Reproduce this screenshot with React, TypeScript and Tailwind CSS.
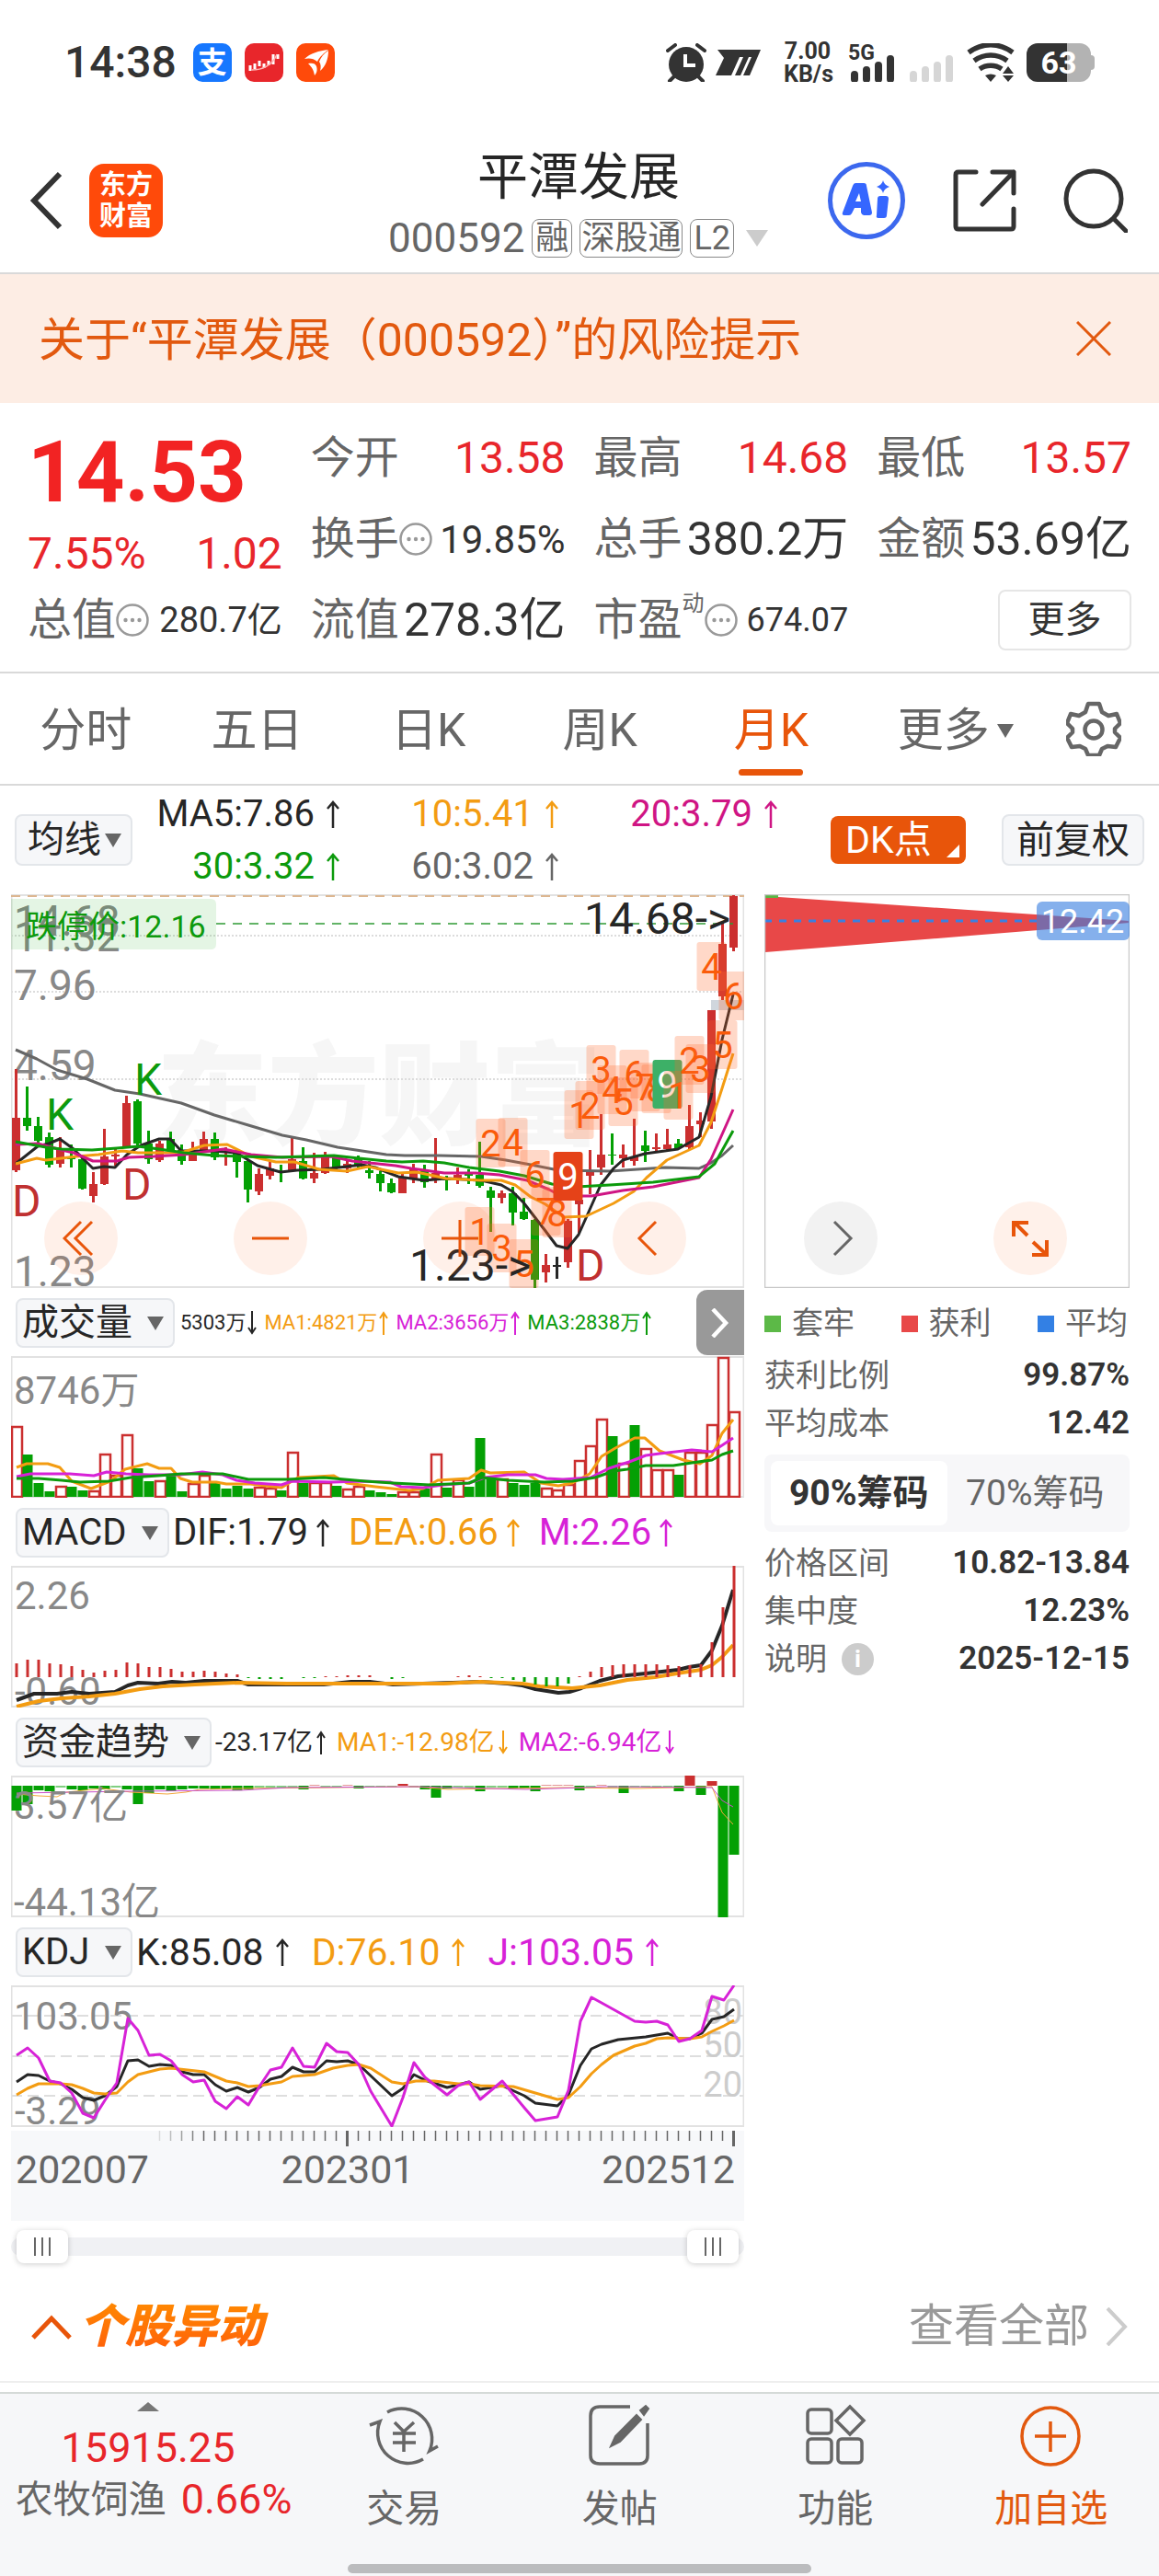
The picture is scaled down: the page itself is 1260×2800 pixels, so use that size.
/**
 * Stock Detail Page
 *
 * Monthly K-line view of a single stock: quote header, period tabs,
 * candle chart with sub-indicators, chip distribution and bottom bar.
 */

import React, { useState } from 'react';

type Point = [number, number];
// high, body top, body bottom, low, colour
type Candle = [number, number, number, number, 'r' | 'g' | 'k'];

const RED = '#cb2f2f';
const GREEN = '#04a004';
const STEP = 12;

const candleX = (i: number) => 5.5 + i * STEP;
const toPoints = (points: Point[]) => points.map((p) => p.join(',')).join(' ');

const CANDLES: Candle[] = [
  [190, 243, 300, 302, 'r'], [209, 243, 252, 257, 'g'], [242, 252, 268, 270, 'g'], [259, 264, 294, 297, 'g'],
  [264, 277, 293, 297, 'r'], [272, 286, 288, 297, 'g'], [285, 288, 320, 321, 'g'], [302, 315, 328, 335, 'r'],
  [255, 285, 315, 316, 'r'], [276, 283, 285, 295, 'r'], [219, 227, 275, 276, 'r'], [223, 225, 271, 273, 'g'],
  [257, 271, 288, 293, 'g'], [268, 271, 289, 291, 'r'], [258, 266, 279, 281, 'g'], [272, 278, 290, 294, 'g'],
  [269, 281, 290, 290, 'r'], [258, 266, 278, 279, 'r'], [259, 266, 286, 289, 'g'], [275, 279, 281, 295, 'r'],
  [277, 281, 291, 308, 'g'], [288, 290, 321, 335, 'g'], [298, 304, 323, 327, 'r'], [290, 298, 306, 310, 'r'],
  [294, 301, 302, 313, 'g'], [265, 288, 301, 302, 'r'], [275, 290, 309, 310, 'g'], [281, 303, 309, 314, 'r'],
  [280, 285, 303, 304, 'r'], [283, 285, 298, 301, 'g'], [290, 293, 298, 303, 'r'], [284, 288, 296, 298, 'g'],
  [290, 300, 303, 309, 'g'], [301, 304, 314, 323, 'g'], [309, 314, 324, 325, 'g'], [303, 307, 325, 325, 'r'],
  [293, 298, 309, 314, 'r'], [294, 301, 313, 319, 'g'], [265, 303, 310, 314, 'r'], [306, 309, 311, 322, 'g'],
  [297, 305, 311, 315, 'r'], [299, 303, 306, 315, 'g'], [269, 305, 317, 319, 'g'], [318, 322, 330, 367, 'g'],
  [322, 325, 330, 336, 'r'], [318, 325, 346, 360, 'g'], [330, 345, 353, 354, 'g'], [353, 354, 419, 428, 'g'],
  [391, 403, 411, 422, 'r'], [394, 403, 405, 418, 'k'], [353, 355, 400, 406, 'r'], [328, 332, 337, 368, 'r'],
  [278, 302, 306, 326, 'r'], [239, 283, 297, 305, 'r'], [260, 283, 284, 294, 'g'], [272, 283, 287, 297, 'r'],
  [244, 285, 290, 295, 'r'], [257, 273, 279, 291, 'g'], [260, 275, 277, 279, 'r'], [255, 272, 277, 278, 'r'],
  [266, 271, 276, 277, 'g'], [229, 252, 275, 277, 'r'], [237, 246, 250, 264, 'r'], [126, 126, 247, 255, 'r'],
  [31, 54, 111, 115, 'r'], [1, 2, 58, 62, 'r'],
];

const MA5: Point[] = [[5, 293], [29, 274], [41, 271], [53, 266], [68, 277], [89, 298], [101, 296], [113, 297], [126, 283], [141, 273], [161, 266], [173, 266], [185, 279], [221, 279], [245, 281], [268, 295], [293, 302], [311, 300], [338, 299], [365, 296], [381, 294], [396, 297], [421, 307], [449, 311], [473, 309], [511, 311], [533, 316], [545, 323], [557, 335], [581, 366], [593, 382], [605, 385], [617, 370], [641, 316], [655, 298], [665, 289], [689, 282], [725, 277], [748, 264], [761, 220], [773, 158], [785, 109]];
const MA10: Point[] = [[5, 293], [28, 287], [38, 289], [71, 285], [95, 283], [121, 279], [138, 281], [168, 281], [188, 280], [210, 273], [235, 272], [261, 285], [288, 291], [308, 291], [335, 299], [365, 301], [388, 296], [421, 303], [441, 302], [473, 309], [511, 311], [533, 311], [548, 316], [565, 329], [581, 337], [601, 351], [625, 350], [655, 336], [677, 323], [691, 308], [713, 289], [748, 273], [761, 248], [773, 211], [785, 173]];
const MA20: Point[] = [[5, 272], [29, 271], [55, 278], [68, 281], [89, 290], [115, 290], [128, 286], [155, 285], [188, 283], [231, 277], [261, 283], [295, 286], [348, 285], [371, 290], [418, 295], [435, 298], [471, 303], [505, 303], [531, 305], [561, 311], [585, 321], [598, 328], [631, 328], [665, 322], [698, 318], [748, 308], [761, 288], [773, 261], [785, 234]];
const MA30: Point[] = [[5, 269], [38, 275], [55, 277], [88, 278], [115, 276], [138, 274], [161, 277], [188, 281], [221, 284], [288, 286], [351, 284], [378, 287], [408, 290], [425, 291], [448, 290], [471, 292], [498, 297], [531, 301], [558, 306], [588, 315], [615, 318], [651, 316], [698, 313], [748, 307], [765, 293], [785, 257]];
const MA60: Point[] = [[5, 169], [28, 179], [50, 191], [83, 201], [113, 213], [140, 217], [185, 227], [221, 240], [258, 251], [295, 262], [321, 267], [355, 275], [408, 283], [428, 284], [465, 284], [511, 285], [538, 289], [565, 294], [595, 300], [651, 301], [711, 297], [748, 298], [761, 292], [773, 284], [785, 273]];

// candle index, box top, digit, solid fill for a completed count
const COUNTS: [number, number, string, string?][] = [
  [42, 340, '1'], [43, 244, '2'], [44, 358, '3'], [45, 243, '4'], [46, 375, '5'], [47, 278, '6'], [48, 318, '7'],
  [49, 320, '8'], [50, 280, '9', '#e54218'], [51, 213, '1'], [52, 203, '2'], [53, 164, '3'], [54, 186, '4'],
  [55, 199, '5'], [56, 169, '6'], [57, 183, '7'], [58, 185, '8'], [59, 180, '9', '#3db067'], [60, 192, '1'],
  [61, 154, '2'], [62, 163, '3'], [63, 52, '4'], [64, 137, '5'], [65, 84, '6'],
];

const VOLUMES: [number, 'r' | 'g'][] = [
  [76, 'r'], [107, 'g'], [138, 'g'], [147, 'g'], [141, 'r'], [142, 'g'], [146, 'g'], [146, 'r'], [106, 'r'], [129, 'r'],
  [85, 'r'], [122, 'g'], [136, 'g'], [135, 'r'], [129, 'g'], [147, 'g'], [138, 'r'], [129, 'r'], [138, 'g'], [144, 'g'],
  [141, 'g'], [144, 'g'], [142, 'r'], [143, 'r'], [146, 'g'], [104, 'r'], [138, 'g'], [137, 'r'], [137, 'r'], [141, 'g'],
  [144, 'r'], [141, 'r'], [146, 'g'], [148, 'g'], [150, 'g'], [147, 'r'], [147, 'r'], [144, 'g'], [106, 'r'], [143, 'g'],
  [134, 'r'], [142, 'g'], [89, 'g'], [133, 'g'], [133, 'r'], [138, 'g'], [140, 'g'], [138, 'g'], [143, 'r'], [145, 'r'],
  [139, 'r'], [113, 'r'], [97, 'r'], [68, 'r'], [87, 'g'], [116, 'r'], [75, 'g'], [100, 'r'], [123, 'r'], [123, 'r'],
  [129, 'g'], [104, 'r'], [104, 'r'], [74, 'r'], [1, 'r'], [60, 'r'],
];
const VOL_MA1: Point[] = [[6, 121], [17, 117], [40, 117], [53, 121], [66, 136], [87, 144], [108, 136], [124, 123], [148, 117], [161, 122], [174, 122], [184, 133], [197, 137], [223, 137], [234, 139], [260, 139], [294, 143], [312, 132], [351, 130], [365, 138], [396, 142], [433, 146], [448, 144], [464, 135], [498, 133], [511, 124], [521, 127], [558, 126], [576, 138], [595, 141], [610, 138], [629, 128], [642, 109], [657, 100], [678, 89], [689, 89], [705, 103], [731, 113], [749, 117], [762, 108], [773, 84], [785, 69]];
const VOL_MA2: Point[] = [[6, 131], [21, 128], [64, 128], [90, 130], [104, 126], [125, 128], [150, 129], [184, 129], [208, 126], [230, 129], [245, 135], [265, 138], [294, 140], [305, 136], [350, 137], [380, 136], [412, 137], [424, 142], [448, 143], [470, 140], [498, 138], [515, 132], [540, 129], [570, 129], [582, 133], [600, 134], [630, 132], [650, 122], [672, 115], [690, 108], [705, 106], [740, 102], [762, 104], [773, 97], [785, 89]];
const VOL_MA3: Point[] = [[6, 133], [30, 133], [55, 135], [75, 137], [106, 136], [130, 132], [160, 130], [185, 128], [230, 128], [258, 134], [300, 134], [340, 132], [385, 136], [415, 138], [455, 140], [498, 138], [512, 132], [540, 135], [580, 137], [610, 136], [635, 132], [655, 125], [670, 123], [690, 119], [720, 119], [740, 116], [762, 113], [773, 107], [785, 103]];

// bar ends, measured from the zero line at 121
const MACD_BARS = [
  106, 102, 102, 106, 107, 109, 113, 116, 114, 113, 105, 106, 110, 110, 112, 115, 115, 114, 115, 117, 118, 122, 123, 123,
  123, 121, 122, 122, 120, 120, 119, 119, 119, 121, 123, 122, 121, 121, 121, 121, 120, 119, 120, 122, 122, 124, 126, 129,
  131, 131, 128, 120, 115, 110, 108, 107, 107, 107, 107, 108, 109, 108, 107, 83, 45, 0,
];
const DIF: Point[] = [[6, 146], [25, 139], [50, 139], [66, 137], [85, 139], [113, 137], [127, 130], [138, 127], [160, 128], [175, 126], [190, 127], [210, 125], [246, 125], [258, 129], [340, 129], [370, 126], [390, 126], [415, 129], [480, 127], [510, 126], [540, 128], [556, 130], [570, 134], [595, 138], [607, 137], [620, 133], [640, 125], [660, 120], [690, 117], [725, 113], [737, 110], [750, 108], [762, 92], [773, 65], [785, 26]];
const DEA: Point[] = [[6, 153], [30, 147], [55, 144], [85, 142], [113, 139], [140, 134], [165, 131], [200, 129], [246, 127], [300, 128], [400, 128], [470, 128], [510, 126], [556, 128], [575, 131], [610, 133], [640, 130], [670, 124], [700, 121], [730, 116], [750, 113], [762, 108], [773, 99], [785, 86]];

// bar ends, measured from the zero line at 11
const FUND_BARS = [
  38, 31, 16, 17, 13, 15, 16, 14, 15, 13, 15, 31, 19, 15, 17, 15, 14, 14, 15, 14, 16, 15, 13, 13, 13, 13, 15, 10, 13, 13,
  10, 14, 13, 13, 13, 9, 13, 15, 24, 14, 13, 13, 17, 13, 13, 14, 14, 17, 10, 10, 10, 16, 13, 10, 13, 19, 13, 13, 13, 13,
  17, 0, 21, 6, 154, 86,
];
const FUND_MA1: Point[] = [[6, 20], [30, 22], [50, 23], [60, 18], [100, 14], [130, 18], [170, 20], [190, 18], [205, 15], [250, 14], [440, 12], [475, 15], [600, 13], [680, 14], [762, 12], [773, 40], [785, 53]];
const FUND_MA2: Point[] = [[6, 19], [130, 17], [250, 16], [300, 13], [440, 12], [560, 15], [650, 12], [762, 13], [773, 27], [785, 34]];

const KDJ_K: Point[] = [[6, 105], [18, 97], [30, 98], [42, 104], [54, 107], [66, 113], [78, 122], [90, 125], [102, 120], [115, 110], [127, 82], [138, 81], [150, 88], [162, 86], [174, 87], [186, 94], [198, 97], [210, 97], [222, 108], [234, 115], [246, 111], [258, 116], [270, 111], [282, 102], [294, 99], [306, 89], [318, 94], [330, 94], [343, 82], [354, 83], [366, 82], [378, 86], [414, 120], [426, 112], [438, 97], [450, 103], [474, 111], [498, 105], [510, 113], [534, 109], [558, 120], [570, 128], [594, 131], [606, 119], [619, 87], [631, 69], [642, 64], [660, 59], [690, 56], [714, 52], [726, 58], [738, 58], [751, 52], [762, 37], [775, 34], [786, 26]];
const KDJ_D: Point[] = [[6, 119], [18, 112], [30, 107], [54, 107], [66, 108], [78, 112], [90, 117], [102, 118], [115, 117], [127, 105], [138, 97], [162, 91], [174, 90], [210, 94], [234, 104], [246, 106], [258, 110], [270, 109], [294, 105], [306, 99], [330, 97], [350, 90], [366, 87], [378, 86], [391, 90], [414, 105], [426, 107], [440, 104], [460, 104], [486, 107], [498, 107], [510, 109], [546, 110], [570, 117], [594, 124], [606, 122], [619, 110], [631, 96], [642, 86], [655, 76], [678, 66], [690, 63], [702, 58], [714, 57], [738, 58], [751, 56], [762, 50], [775, 44], [786, 38]];
const KDJ_J: Point[] = [[6, 76], [18, 68], [30, 79], [42, 104], [54, 106], [66, 117], [78, 139], [90, 144], [102, 125], [115, 106], [127, 36], [138, 49], [150, 76], [162, 75], [174, 82], [186, 97], [198, 105], [210, 103], [222, 126], [234, 134], [246, 121], [258, 130], [270, 110], [282, 92], [294, 89], [306, 68], [318, 88], [330, 89], [343, 63], [354, 72], [366, 73], [378, 86], [391, 115], [414, 153], [426, 122], [438, 84], [450, 100], [474, 119], [486, 109], [498, 105], [510, 124], [534, 104], [558, 133], [570, 147], [594, 143], [606, 114], [619, 39], [631, 13], [642, 19], [678, 39], [690, 40], [702, 39], [714, 43], [726, 61], [738, 58], [751, 49], [762, 12], [775, 16], [786, 0]];

const Line: React.FC<{ points: Point[]; color: string; width?: number }> = ({ points, color, width = 3 }) => (
  <polyline points={toPoints(points)} fill="none" stroke={color} strokeWidth={width} strokeLinejoin="round" />
);

const Frame: React.FC<{ height: number }> = ({ height }) => (
  <rect x="0.5" y="1" width="796" height={height - 2} fill="none" stroke="#e2e2e2" strokeWidth="2" />
);

const Arrow: React.FC<{ down?: boolean }> = ({ down }) => (
  <svg className="h-[30px] w-4 shrink-0" viewBox="0 0 16 30" fill="none" stroke="currentColor" strokeWidth="2.5">
    <path d={down ? 'M8 0v28M2 21l6 7 6-7' : 'M8 30V2M2 9l6-7 6 7'} />
  </svg>
);

const SmallArrow: React.FC<{ down?: boolean }> = ({ down }) => (
  <svg className="h-[26px] w-[10px] shrink-0" viewBox="0 0 10 26" fill="none" stroke="currentColor" strokeWidth="2">
    <path d={down ? 'M5 0v24M1 18l4 6 4-6' : 'M5 26V2M1 8l4-6 4 6'} />
  </svg>
);

const MoreDots: React.FC = () => (
  <svg className="h-9 w-9 shrink-0" viewBox="0 0 36 36">
    <circle cx="18" cy="18" r="16.5" fill="none" stroke="#999" strokeWidth="2.5" />
    <circle cx="10.5" cy="18" r="2.2" fill="#999" />
    <circle cx="18" cy="18" r="2.2" fill="#999" />
    <circle cx="25.5" cy="18" r="2.2" fill="#999" />
  </svg>
);

/* ---------- Header ---------- */

const StatusBar: React.FC = () => (
  <div className="flex h-[136px] items-center justify-between pl-[70px] pr-[70px] text-[#333]">
    <div className="flex items-center gap-[14px]">
      <span className="mr-1 text-[48px] font-medium leading-[56px]">14:38</span>
      <span className="flex h-[42px] w-[42px] items-center justify-center rounded-[10px] bg-[#1677ff] text-[32px] font-bold leading-none text-white">
        支
      </span>
      <svg className="h-[42px] w-[42px]" viewBox="0 0 42 42">
        <rect width="42" height="42" rx="10" fill="#e8262b" />
        <path d="M6 30v-6M11 28v-6M16 25v-6M21 27v-5M26 24v-5M31 23V12M36 17v-5" stroke="#fff" strokeWidth="3" />
        <path d="M8 29c10 0 22-4 27-17" stroke="#ffb3b3" strokeWidth="1.5" fill="none" />
      </svg>
      <svg className="h-[42px] w-[42px]" viewBox="0 0 42 42">
        <rect width="42" height="42" rx="10" fill="#ff4a0a" />
        <path d="M9 17C15 11 25 8 35 7c-5 4-10 8-12 13C19 16 13 16 9 17ZM25 20c2-5 5-9 10-12 0 9-3 17-9 22 1-4 1-7-1-10Z" fill="#fff" />
        <path d="M13 22c5-1 8 0 9 3s1 7-2 10c-1-6-3-9-7-13Z" fill="#fff" />
      </svg>
    </div>
    <div className="flex items-center">
      <svg className="mr-[10px] h-[42px] w-[44px]" viewBox="0 0 44 42">
        <circle cx="22" cy="23" r="19" fill="#333" />
        <path d="M2 8l8-6M42 8l-8-6M4 41l6-6M40 41l-6-6" stroke="#333" strokeWidth="4" strokeLinecap="round" />
        <path d="M21 12v12h11" stroke="#fff" strokeWidth="4" fill="none" />
      </svg>
      <svg className="mr-6 h-7 w-[50px]" viewBox="0 0 50 28" fill="#333">
        <path d="M2 0h47L37 28h-7l9-20h-3l-9 20h-6l9-20h-4l-9 20H0l9-19Z" />
      </svg>
      <div className="mr-[18px] w-[52px] text-center text-[25px] font-bold leading-[25px]">
        <div>7.00</div>
        <div>KB/s</div>
      </div>
      <svg className="mr-[15px] h-[42px] w-[52px]" viewBox="0 0 52 42">
        <text x="0" y="18" fontSize="23" fontWeight="700" fill="#333">5G</text>
        <path d="M7 34v5M20 29v10M33 24v15M46 17v22" stroke="#333" strokeWidth="8" strokeLinecap="round" />
      </svg>
      <svg className="mr-3 h-[42px] w-[50px]" viewBox="0 0 50 42">
        <path d="M4 34v5M17 29v10M30 24v15M43 17v22" stroke="#d6d6d6" strokeWidth="8" strokeLinecap="round" />
      </svg>
      <svg className="mr-3 h-[42px] w-[53px]" viewBox="0 0 53 42">
        <path d="M2 10C17-1 35-1 50 10M8 19c11-8 25-8 36 0M14 28c7-5 17-5 24 0" fill="none" stroke="#333" strokeWidth="5.5" />
        <path d="M20 35c4-2 8-2 12 0l-6 7ZM39 33l6-8 6 8ZM39 35l6 7 6-7Z" fill="#333" />
      </svg>
      <div className="flex items-center">
        <div className="flex h-[42px] w-[70px] items-center justify-center rounded-[12px] bg-[linear-gradient(90deg,#333_63%,#b3b3b3_63%)] text-[34px] font-bold leading-none text-white">
          63
        </div>
        <div className="h-4 w-1 rounded-r bg-[#b3b3b3]" />
      </div>
    </div>
  </div>
);

const TitleBar: React.FC = () => (
  <header className="flex h-[162px] items-center border-b-2 border-[#d9d9d9]">
    <div className="flex flex-1 items-center gap-[29px] pl-8 pt-[3px]">
      <button aria-label="返回">
        <svg className="h-[64px] w-9" viewBox="0 0 36 64" fill="none" stroke="#333" strokeWidth="6">
          <path d="M33 3L5 32l28 29" />
        </svg>
      </button>
      <div className="flex h-20 w-20 flex-col items-center justify-center rounded-[16px] bg-[#ff4a0a] text-[29px] font-bold leading-[34px] text-white">
        <span>东方</span>
        <span>财富</span>
      </div>
    </div>
    <div className="flex flex-col items-center pt-4">
      <h1 className="text-[55px] leading-[70px] text-[#262626]">平潭发展</h1>
      <div className="flex items-center gap-2 text-[36px] leading-[40px] text-[#666]">
        <span className="text-[44px] leading-[64px]">000592</span>
        <span className="rounded-[8px] border border-[#888] px-[3px]">融</span>
        <span className="rounded-[8px] border border-[#888] px-[1px]">深股通</span>
        <span className="rounded-[8px] border border-[#888] px-[3px]">L2</span>
        <svg className="ml-1 h-[18px] w-[26px]" viewBox="0 0 26 18">
          <path d="M1 0h24L13 18Z" fill="#ccc" />
        </svg>
      </div>
    </div>
    <div className="flex flex-1 items-center justify-end gap-[51px] pr-[34px] pt-[3px]">
      <button aria-label="AI">
        <svg className="h-[84px] w-[84px]" viewBox="0 0 84 84">
          <circle cx="42" cy="42" r="39.5" fill="none" stroke="#3c68ee" strokeWidth="5" />
          <path
            fillRule="evenodd"
            fill="#3566ff"
            d="M27 23h12q3 0 3 3l6 29q0 3-3 3h-6q-2 0-3-3v-5h-7l-3 6q-1 2-3 2h-5q-3 0-2-3l11-29q1-3 3-3ZM34 34l-4 9h6Z"
          />
          <path d="M57 37h6q3 0 3 3l-2 18q0 3-3 3h-6q-3 0-2-3l1-18q0-3 3-3Z" fill="#3566ff" />
          <path d="M60 20q1 5 7 7-6 2-7 7-1-5-7-7 6-2 7-7Z" fill="#3566ff" />
        </svg>
      </button>
      <button aria-label="分享">
        <svg className="h-[70px] w-[70px]" viewBox="0 0 70 70" fill="none" stroke="#333" strokeWidth="5" strokeLinecap="round" strokeLinejoin="round">
          <path d="M26 4H7q-3 0-3 3v56q0 3 3 3h57q3 0 3-3V44M44 4h23v23M67 4L33 39" />
        </svg>
      </button>
      <button aria-label="搜索">
        <svg className="h-[70px] w-[70px]" viewBox="0 0 70 70" fill="none" stroke="#333" strokeWidth="5" strokeLinecap="round">
          <circle cx="33" cy="33" r="30" />
          <path d="M55 55l13 13" />
        </svg>
      </button>
    </div>
  </header>
);

const RiskBanner: React.FC = () => (
  <div className="flex h-[140px] items-center justify-between bg-[#fdede4] pl-[42px] pr-[52px] text-[#e2590f]">
    <a href="#risk" className="pt-1 text-[50px] leading-[60px]">
      关于“平潭发展（000592）”的风险提示
    </a>
    <button aria-label="关闭">
      <svg className="h-[38px] w-[38px]" viewBox="0 0 38 38" stroke="currentColor" strokeWidth="3">
        <path d="M1 1l36 36M37 1L1 37" />
      </svg>
    </button>
  </div>
);

/* ---------- Quote ---------- */

interface QuoteCellProps {
  label: string;
  value: string;
  sup?: string;
  info?: boolean;
  valueClass: string;
}

const QuoteCell: React.FC<QuoteCellProps> = ({ label, value, sup, info, valueClass }) => (
  <div className="flex items-center whitespace-nowrap">
    <dt className="flex items-center text-[48px] leading-[60px] text-[#666]">
      {label}
      {sup && <span className="self-start text-[24px] leading-[24px]">{sup}</span>}
      {info && <MoreDots />}
    </dt>
    <dd className={`ml-auto ${valueClass}`}>{value}</dd>
  </div>
);

const QuotePanel: React.FC = () => (
  <section className="border-b-2 border-[#d9d9d9] px-[30px] pb-3 pt-4">
    <dl className="grid grid-cols-4 grid-rows-[88px_88px_88px] gap-x-[31px]">
      <div className="row-span-2 pt-1 text-[#e8262b]">
        <div className="text-[92px] font-bold leading-[112px] text-[#f22323]">14.53</div>
        <div className="flex justify-between text-[48px] leading-[64px]">
          <span>7.55%</span>
          <span>1.02</span>
        </div>
      </div>
      <QuoteCell label="今开" value="13.58" valueClass="text-[48px] text-[#e8262b]" />
      <QuoteCell label="最高" value="14.68" valueClass="text-[48px] text-[#e8262b]" />
      <QuoteCell label="最低" value="13.57" valueClass="text-[48px] text-[#e8262b]" />
      <QuoteCell label="换手" value="19.85%" info valueClass="text-[42px] text-[#333]" />
      <QuoteCell label="总手" value="380.2万" valueClass="text-[50px] text-[#333]" />
      <QuoteCell label="金额" value="53.69亿" valueClass="text-[50px] text-[#333]" />
      <QuoteCell label="总值" value="280.7亿" info valueClass="text-[38px] text-[#333]" />
      <QuoteCell label="流值" value="278.3亿" valueClass="text-[50px] text-[#333]" />
      <QuoteCell label="市盈" value="674.07" sup="动" info valueClass="text-[36px] text-[#333]" />
      <div className="flex items-center justify-end">
        <button className="h-[66px] w-[145px] rounded-[8px] border-2 border-[#e6e6e6] text-[40px] leading-none text-[#333]">
          更多
        </button>
      </div>
    </dl>
  </section>
);

/* ---------- Tabs & toolbar ---------- */

const PERIODS = ['分时', '五日', '日K', '周K', '月K'];

const PeriodTabs: React.FC = () => {
  const [active, setActive] = useState('月K');

  return (
    <nav className="flex h-[122px] items-stretch border-b-2 border-[#d9d9d9] text-[50px] text-[#666]">
      {PERIODS.map((p) => (
        <button
          key={p}
          onClick={() => setActive(p)}
          className={`relative flex-1 pt-1 ${p === active ? 'text-[#e8550a]' : ''}`}
        >
          {p}
          {p === active && (
            <span className="absolute bottom-[9px] left-1/2 h-[7px] w-[70px] -translate-x-1/2 rounded-full bg-[#e8550a]" />
          )}
        </button>
      ))}
      <button className="flex-1 pt-1">
        <span className="flex items-center justify-center gap-2 pl-7">
          更多
          <svg className="h-[15px] w-[18px]" viewBox="0 0 18 15">
            <path d="M0 0h18L9 15Z" fill="#666" />
          </svg>
        </span>
      </button>
      <button aria-label="设置" className="flex w-[142px] items-center justify-center">
        <svg className="h-[60px] w-[60px]" viewBox="0 0 60 60" fill="none" stroke="#666" strokeWidth="4.5" strokeLinejoin="round">
          <path d="M24 3h12l3 9 7 4 9-2 4 10-6 6v4l6 6-5 10-9-1-6 3-3 7H24l-3-7-6-3-9 1-5-10 6-6v-4l-6-6 4-10 9 2 7-4Z" />
          <circle cx="30" cy="31" r="9.5" />
        </svg>
      </button>
    </nav>
  );
};

const IndicatorSelect: React.FC<{ id: string; label: string; name: string; tall?: boolean }> = ({ id, label, name, tall }) => (
  <div className="relative flex shrink-0 items-center">
    <label htmlFor={id} className="sr-only">
      {label}
    </label>
    <select
      id={id}
      className={`appearance-none rounded-[8px] border-2 border-[#e3e6ea] bg-[#f6f7f9] text-[40px] leading-[44px] text-[#262626] ${
        tall ? 'h-[56px] pl-3 pr-8' : 'h-[54px] pl-[5px] pr-[44px]'
      }`}
    >
      <option>{name}</option>
    </select>
    <svg className="pointer-events-none absolute right-3 h-[15px] w-[18px]" viewBox="0 0 18 15">
      <path d="M0 0h18L9 15Z" fill="#666" />
    </svg>
  </div>
);

const ChartToolbar: React.FC = () => (
  <div className="flex h-[118px] items-center pl-4 pr-4">
    <IndicatorSelect id="main-indicator" label="主图指标" name="均线" tall />
    <div className="ml-3 grid grid-cols-[214px_238px_238px] text-[40px] leading-[57px]">
      <span className="flex items-center justify-end gap-3 text-[#262626]">MA5:7.86<Arrow /></span>
      <span className="flex items-center justify-end gap-3 text-[#f39c12]">10:5.41<Arrow /></span>
      <span className="flex items-center justify-end gap-3 text-[#cf1584]">20:3.79<Arrow /></span>
      <span className="flex items-center justify-end gap-3 text-[#0c9a0c]">30:3.32<Arrow /></span>
      <span className="flex items-center justify-end gap-3 text-[#666]">60:3.02<Arrow /></span>
    </div>
    <button className="relative ml-auto h-[52px] w-[147px] rounded-[8px] bg-[#e8550a] pl-4 text-left text-[41px] leading-none text-white">
      DK点
      <svg className="absolute bottom-[7px] right-[7px] h-[14px] w-[14px]" viewBox="0 0 14 14">
        <path d="M14 0v14H0Z" fill="#fff" />
      </svg>
    </button>
    <button className="ml-[39px] h-[56px] w-[155px] rounded-[8px] border-2 border-[#e3e6ea] bg-[#f6f7f9] text-[41px] leading-none text-[#262626]">
      前复权
    </button>
  </div>
);

/* ---------- Charts ---------- */

const CandleChart: React.FC = () => (
  <svg className="block w-full" viewBox="0 0 797 428">
    <text x="158" y="262" fontSize="121" fontWeight="900" fill="#f6f6f6">东方财富</text>
    {[45, 106, 201].map((y) => (
      <path key={y} d={`M0 ${y}H797`} stroke="#dcdcdc" strokeWidth="2" strokeDasharray="2 2" />
    ))}
    <Frame height={428} />
    <path d="M0 2H797" stroke="#dcb690" strokeWidth="2" strokeDasharray="10 8" />
    <g fontSize="46" fill="#888">
      <text x="3" y="45">14.68</text>
      <text x="3" y="62">11.32</text>
      <text x="3" y="115">7.96</text>
      <text x="3" y="202">4.59</text>
      <text x="3" y="426">1.23</text>
    </g>

    {CANDLES.map(([high, top, bottom, low, c], i) => {
      const color = c === 'r' ? RED : c === 'g' ? GREEN : '#262626';
      return (
        <g key={i} fill={color}>
          <rect x={candleX(i) - 1.5} y={high} width="3" height={low - high} />
          <rect x={candleX(i) - 4.5} y={top} width="9" height={bottom - top} />
        </g>
      );
    })}

    <rect x="761" y="115" width="36" height="11" fill="#c4ccd4" opacity="0.8" />
    <Line points={MA60} color="#666" />
    <Line points={MA5} color="#262626" />
    <Line points={MA10} color="#f39c12" />
    <Line points={MA20} color="#cf1584" />
    <Line points={MA30} color="#0c9a0c" />

    {/* sequence counts */}
    <g fontSize="40" textAnchor="middle">
      {COUNTS.map(([i, top, digit, solid]) => (
        <g key={i}>
          <rect
            x={candleX(i) - 16}
            y={top}
            width="32"
            height="53"
            rx="3"
            fill={solid ?? '#ff6a2a'}
            opacity={solid ? 1 : 0.26}
          />
          <text x={candleX(i)} y={top + 41} fill={solid ? '#fff' : '#fa5b0a'}>{digit}</text>
        </g>
      ))}
    </g>

    {/* limit-down price */}
    <path d="M0 5H217q6 0 6 6V54q0 6-6 6H0Z" fill="#08a008" opacity="0.11" />
    <text x="16" y="47" fontSize="34" fill="#0c9a0c">跌停价:12.16</text>
    <path d="M223 32H785" stroke="#2f9a35" strokeWidth="1.5" strokeDasharray="10 8" />

    <g fontSize="48">
      <text x="38" y="256" fill="#0c9a0c">K</text>
      <text x="134" y="218" fill="#0c9a0c">K</text>
      <text x="1" y="350" fill="#c03030">D</text>
      <text x="121" y="332" fill="#c03030">D</text>
      <text x="614" y="420" fill="#c03030">D</text>
      <text x="782" y="43" textAnchor="end" fill="#262626">14.68-&gt;</text>
      <text x="565" y="420" textAnchor="end" fill="#262626">1.23-&gt;</text>
    </g>
  </svg>
);

const VolumeChart: React.FC = () => (
  <svg className="block w-full" viewBox="0 0 797 154">
    <Frame height={154} />
    {VOLUMES.map(([top, c], i) =>
      c === 'g' ? (
        <rect key={i} x={candleX(i) - 5} y={top} width="11" height={153 - top} fill={GREEN} />
      ) : (
        <rect key={i} x={candleX(i) - 4.5} y={top + 1} width="11" height={152 - top} fill="#fff" stroke={RED} strokeWidth="2.5" />
      )
    )}
    <Line points={VOL_MA1} color="#f39c12" />
    <Line points={VOL_MA2} color="#d722d7" />
    <Line points={VOL_MA3} color="#0c9a0c" />
    <text x="3" y="52" fontSize="42" fill="#888">8746万</text>
  </svg>
);

const MacdChart: React.FC = () => (
  <svg className="block w-full" viewBox="0 0 797 154">
    <Frame height={154} />
    <g fontSize="42" fill="#888">
      <text x="4" y="47">2.26</text>
      <text x="4" y="151">-0.60</text>
    </g>
    <Line points={DIF} color="#262626" width={4} />
    <Line points={DEA} color="#f39c12" width={4} />
    {MACD_BARS.map((end, i) => (
      <rect
        key={i}
        x={candleX(i) - 1}
        y={Math.min(end, 121)}
        width="3"
        height={Math.abs(end - 121)}
        fill={end < 121 ? RED : GREEN}
      />
    ))}
  </svg>
);

const FundChart: React.FC = () => (
  <svg className="block w-full" viewBox="0 0 797 154">
    <Frame height={154} />
    {FUND_BARS.map((end, i) => (
      <rect
        key={i}
        x={candleX(i) - 5}
        y={Math.min(end, 11)}
        width="11"
        height={Math.abs(end - 11)}
        fill={end < 11 ? RED : GREEN}
        opacity={end === 10 || end === 13 ? 0.5 : 1}
      />
    ))}
    <Line points={FUND_MA1} color="#f3a83c" width={1} />
    <Line points={FUND_MA2} color="#c94fc9" width={1} />
    <g fontSize="42" fill="#888">
      <text x="3" y="47">3.57亿</text>
      <text x="3" y="152">-44.13亿</text>
    </g>
  </svg>
);

const KdjChart: React.FC = () => (
  <svg className="block w-full" viewBox="0 0 797 154">
    {[33, 77, 120].map((y) => (
      <path key={y} d={`M0 ${y}H797`} stroke="#d4d4d4" strokeWidth="1.5" strokeDasharray="12 6" />
    ))}
    <Frame height={154} />
    <g fontSize="38" fill="#ccc" textAnchor="end">
      <text x="795" y="42">80</text>
      <text x="795" y="78">50</text>
      <text x="795" y="121">20</text>
    </g>
    <g fontSize="42" fill="#888">
      <text x="3" y="48">103.05</text>
      <text x="4" y="151">-3.29</text>
    </g>
    <Line points={KDJ_K} color="#262626" />
    <Line points={KDJ_D} color="#f39c12" />
    <Line points={KDJ_J} color="#d722d7" />
  </svg>
);

const TimeAxis: React.FC = () => (
  <svg className="mt-1 block w-full bg-[#f7f8fa]" viewBox="0 0 797 98">
    {Array.from({ length: 53 }, (_, n) => n + 13).map((i) => {
      const major = i === 30 || i === 65;
      return (
        <path
          key={i}
          d={`M${candleX(i)} 0V${major ? 17 : 11}`}
          stroke="#666"
          strokeWidth={major ? 3 : 1.5}
          opacity={i < 17 ? (i - 12) / 5 : 1}
        />
      );
    })}
    <g fontSize="43" fill="#666">
      <text x="5" y="57">202007</text>
      <text x="366" y="57" textAnchor="middle">202301</text>
      <text x="787" y="57" textAnchor="end">202512</text>
    </g>
  </svg>
);

const THUMB =
  'pointer-events-none absolute inset-0 h-full w-full appearance-none bg-transparent [&::-webkit-slider-thumb]:pointer-events-auto [&::-webkit-slider-thumb]:h-[36px] [&::-webkit-slider-thumb]:w-[56px] [&::-webkit-slider-thumb]:appearance-none [&::-webkit-slider-thumb]:rounded-[8px] [&::-webkit-slider-thumb]:bg-white [&::-webkit-slider-thumb]:bg-[linear-gradient(90deg,transparent_19px,#666_19px,#666_21px,transparent_21px,transparent_27px,#666_27px,#666_29px,transparent_29px,transparent_35px,#666_35px,#666_37px,transparent_37px)] [&::-webkit-slider-thumb]:bg-[length:100%_20px] [&::-webkit-slider-thumb]:bg-center [&::-webkit-slider-thumb]:bg-no-repeat [&::-webkit-slider-thumb]:shadow-[0_1px_6px_rgba(0,0,0,0.2)]';

const RangeBar: React.FC = () => (
  <div className="flex h-[56px] items-center">
    <div className="h-5 w-full rounded-full bg-[#f0f1f4] px-[6px]">
      <div className="relative h-full w-full">
        <input type="range" aria-label="起始月份" min={0} max={65} defaultValue={0} className={THUMB} />
        <input type="range" aria-label="结束月份" min={0} max={65} defaultValue={65} className={THUMB} />
      </div>
    </div>
  </div>
);

const SubHeader: React.FC<{ children: React.ReactNode }> = ({ children }) => (
  <div className="relative flex h-[74px] items-center whitespace-nowrap pl-[5px] pt-[2px]">{children}</div>
);

const ROUND_BTN = 'flex h-20 w-20 items-center justify-center rounded-full';

const ChartColumn: React.FC = () => (
  <div className="min-w-0">
    <div className="relative">
      <CandleChart />
      <div className="absolute inset-x-0 bottom-[14px] flex justify-between pl-9 pr-[63px] text-[#e8550a]">
        <button aria-label="快退" className={`${ROUND_BTN} bg-[#ff6a2a]/10`}>
          <svg className="h-10 w-10" viewBox="0 0 40 40" fill="none" stroke="currentColor" strokeWidth="3">
            <path d="M20 2L2 20l18 18M32 2L14 20l18 18" />
          </svg>
        </button>
        <button aria-label="缩小" className={`${ROUND_BTN} bg-[#ff6a2a]/10`}>
          <svg className="h-10 w-10" viewBox="0 0 40 40" stroke="currentColor" strokeWidth="3">
            <path d="M0 20h40" />
          </svg>
        </button>
        <button aria-label="放大" className={`${ROUND_BTN} bg-[#ff6a2a]/10`}>
          <svg className="h-10 w-10" viewBox="0 0 40 40" stroke="currentColor" strokeWidth="3">
            <path d="M0 20h40M20 0v40" />
          </svg>
        </button>
        <button aria-label="左移" className={`${ROUND_BTN} bg-[#ff6a2a]/10`}>
          <svg className="h-10 w-10" viewBox="0 0 40 40" fill="none" stroke="currentColor" strokeWidth="3">
            <path d="M27 2L9 20l18 18" />
          </svg>
        </button>
      </div>
    </div>

    <SubHeader>
      <IndicatorSelect id="sub-volume" label="副图一" name="成交量" />
      <div className="ml-[6px] flex items-center gap-2 text-[22px] leading-[40px]">
        <span className="flex items-center gap-[2px] text-[#262626]">5303万<SmallArrow down /></span>
        <span className="flex items-center gap-[2px] text-[#f39c12]">MA1:4821万<SmallArrow /></span>
        <span className="flex items-center gap-[2px] text-[#d722d7]">MA2:3656万<SmallArrow /></span>
        <span className="flex items-center gap-[2px] text-[#0c9a0c]">MA3:2838万<SmallArrow /></span>
      </div>
      <button aria-label="展开" className="absolute right-0 top-[2px] flex h-[71px] w-[52px] items-center justify-center rounded-l-[12px] bg-[#999]">
        <svg className="h-8 w-5" viewBox="0 0 20 32" fill="none" stroke="#fff" strokeWidth="4.5">
          <path d="M2 1l14 15L2 31" />
        </svg>
      </button>
    </SubHeader>
    <VolumeChart />

    <SubHeader>
      <IndicatorSelect id="sub-macd" label="副图二" name="MACD" />
      <div className="ml-1 flex items-center gap-5 text-[40px] leading-[52px]">
        <span className="flex items-center gap-2 text-[#262626]">DIF:1.79<Arrow /></span>
        <span className="flex items-center gap-2 text-[#f39c12]">DEA:0.66<Arrow /></span>
        <span className="flex items-center gap-2 text-[#d722d7]">M:2.26<Arrow /></span>
      </div>
    </SubHeader>
    <MacdChart />

    <SubHeader>
      <IndicatorSelect id="sub-fund" label="副图三" name="资金趋势" />
      <div className="ml-1 flex items-center gap-3 text-[28px] leading-[52px]">
        <span className="flex items-center gap-1 text-[#262626]">-23.17亿<SmallArrow /></span>
        <span className="flex items-center gap-1 text-[#f39c12]">MA1:-12.98亿<SmallArrow down /></span>
        <span className="flex items-center gap-1 text-[#d722d7]">MA2:-6.94亿<SmallArrow down /></span>
      </div>
    </SubHeader>
    <FundChart />

    <SubHeader>
      <IndicatorSelect id="sub-kdj" label="副图四" name="KDJ" />
      <div className="ml-1 flex items-center gap-6 text-[41px] leading-[52px]">
        <span className="flex items-center gap-3 text-[#262626]">K:85.08<Arrow /></span>
        <span className="flex items-center gap-3 text-[#f39c12]">D:76.10<Arrow /></span>
        <span className="flex items-center gap-3 text-[#d722d7]">J:103.05<Arrow /></span>
      </div>
    </SubHeader>
    <KdjChart />
    <TimeAxis />
    <RangeBar />
  </div>
);

/* ---------- Chip distribution ---------- */

const ChipRow: React.FC<{ label: React.ReactNode; value: string }> = ({ label, value }) => (
  <div className="flex items-center justify-between leading-[52px]">
    <dt className="flex items-center gap-4 text-[#666]">{label}</dt>
    <dd className="text-[35px] font-semibold text-[#333]">{value}</dd>
  </div>
);

const ChipColumn: React.FC = () => {
  const [range, setRange] = useState(90);

  return (
    <div className="min-w-0 text-[34px]">
      <div className="relative">
        <svg className="block w-full" viewBox="0 0 397 428">
          <path d="M1 2L397 29V31L1 63Z" fill="#e84848" />
          <path d="M1 1h14v3H1Z" fill="#5ab544" />
          <path d="M0 29H297" stroke="#3a80e0" strokeWidth="3" strokeDasharray="8 8" />
          <rect x="0.5" y="0.5" width="396" height="427" fill="none" stroke="#c8c8c8" strokeWidth="1.5" />
          <rect x="296" y="8" width="101" height="42" rx="6" fill="#3a80e0" opacity="0.62" />
          <text x="346" y="42" fontSize="36" fill="#fff" textAnchor="middle">12.42</text>
        </svg>
        <div className="absolute inset-x-0 bottom-[14px] flex justify-between pl-[43px] pr-[68px]">
          <button aria-label="右移" className={`${ROUND_BTN} bg-[#f2f2f2]`}>
            <svg className="h-10 w-10" viewBox="0 0 40 40" fill="none" stroke="#666" strokeWidth="3">
              <path d="M13 2l18 18-18 18" />
            </svg>
          </button>
          <button aria-label="全屏" className={`${ROUND_BTN} bg-[#fff1ea]`}>
            <svg className="h-10 w-10" viewBox="0 0 40 40" fill="none" stroke="#e8550a" strokeWidth="4">
              <path d="M2 18V3h16M3 3l14 14M38 22v16H22M37 37L23 24" />
            </svg>
          </button>
        </div>
      </div>
      <ul className="flex h-[69px] items-center justify-between pr-[2px] pt-2 text-[#666]">
        <li className="flex items-center gap-[12px]"><i className="h-[18px] w-[18px] bg-[#5cb947]" />套牢</li>
        <li className="flex items-center gap-[12px]"><i className="h-[18px] w-[18px] bg-[#e84848]" />获利</li>
        <li className="flex items-center gap-[12px]"><i className="h-[18px] w-[18px] bg-[#3380e4]" />平均</li>
      </ul>
      <dl>
        <ChipRow label="获利比例" value="99.87%" />
        <ChipRow label="平均成本" value="12.42" />
      </dl>
      <div className="mb-2 mt-2 flex h-[84px] rounded-[8px] bg-[#f7f7f9] px-[7px] py-[7px] text-[39px]">
        {[90, 70].map((r) => (
          <button
            key={r}
            onClick={() => setRange(r)}
            className={`flex-1 rounded-[8px] leading-none ${
              r === range ? 'bg-white font-bold text-[#333]' : 'text-[#666]'
            }`}
          >
            {r}%筹码
          </button>
        ))}
      </div>
      <dl>
        <ChipRow label="价格区间" value="10.82-13.84" />
        <ChipRow label="集中度" value="12.23%" />
        <ChipRow
          label={
            <>
              说明
              <span className="flex h-[35px] w-[35px] items-center justify-center rounded-full bg-[#ccc] text-[26px] font-bold leading-none text-white">
                i
              </span>
            </>
          }
          value="2025-12-15"
        />
      </dl>
    </div>
  );
};

/* ---------- Footer ---------- */

const MovesRow: React.FC = () => (
  <section className="flex h-[120px] items-center justify-between border-b-2 border-[#eee] pl-[34px] pr-[34px]">
    <h2 className="flex items-center gap-2">
      <svg className="h-7 w-11" viewBox="0 0 44 28" fill="none" stroke="#e8550a" strokeWidth="5">
        <path d="M2 26L22 5l20 21" />
      </svg>
      <span className="bg-gradient-to-b from-[#ff8c00] to-[#ff5a0a] bg-clip-text pr-2 text-[50px] font-black italic leading-[64px] text-transparent">
        个股异动
      </span>
    </h2>
    <a href="#moves" className="flex items-center gap-[18px] text-[49px] leading-[60px] text-[#999]">
      查看全部
      <svg className="h-[42px] w-6" viewBox="0 0 24 42" fill="none" stroke="#ccc" strokeWidth="4">
        <path d="M2 1l19 20L2 41" />
      </svg>
    </a>
  </section>
);

const ACTIONS = [
  {
    name: '交易',
    icon: (
      <path d="M20 10A33 33 0 0 1 66 52L75 47M1 24L12 20A33 33 0 0 0 59 61M28 21L38 31 49 21M26 33h25M26 43h25M38 31v22" />
    ),
  },
  {
    name: '发帖',
    icon: (
      <>
        <path d="M49 4H16Q6 4 6 14v43q0 9 10 9h43q9 0 9-9V22" />
        <path d="M56 13l5 5-23 24-10 5 5-11ZM60 8l6-5 3 3-5 7Z" fill="currentColor" strokeWidth="2" />
      </>
    ),
  },
  {
    name: '功能',
    icon: (
      <>
        <rect x="8" y="7" width="26" height="26" rx="4" />
        <rect x="8" y="39" width="26" height="26" rx="4" />
        <rect x="41" y="39" width="26" height="26" rx="4" />
        <path d="M54 4l15 15-15 15-15-15Z" />
      </>
    ),
  },
  {
    name: '加自选',
    icon: (
      <>
        <circle cx="37" cy="36" r="31" />
        <path d="M37 20v33M20 36h34" />
      </>
    ),
  },
];

const BottomBar: React.FC = () => (
  <footer className="mt-[10px] border-t-2 border-[#d5dad8] bg-[#f6f7f9]">
    <div className="flex h-[160px]">
      <a href="#sector" className="flex w-[322px] flex-col items-center whitespace-nowrap pt-[9px] text-[#e8262b]">
        <svg className="h-[10px] w-6" viewBox="0 0 24 10">
          <path d="M12 0l12 10H0Z" fill="#777" />
        </svg>
        <span className="mt-3 text-[45px] leading-[56px]">15915.25</span>
        <span className="flex items-center gap-4 pl-3 text-[45px] leading-[56px]">
          <span className="text-[41px] text-[#666]">农牧饲渔</span>0.66%
        </span>
      </a>
      {ACTIONS.map((a, i) => (
        <button
          key={a.name}
          className={`flex flex-1 flex-col items-center pt-[10px] text-[41px] leading-[56px] ${
            i === 3 ? 'text-[#e2590f]' : 'text-[#666]'
          }`}
        >
          <svg className="mb-[15px] h-[72px] w-[76px]" viewBox="0 0 76 72" fill="none" stroke="currentColor" strokeWidth="3.5">
            {a.icon}
          </svg>
          {a.name}
        </button>
      ))}
    </div>
    <div className="flex h-[38px] items-end justify-center pb-[3px]">
      <div className="h-[10px] w-[504px] rounded-full bg-[#bbbcbe]" />
    </div>
  </footer>
);

const App: React.FC = () => (
  <div className="min-h-screen bg-white font-[Roboto,'Noto_Sans_CJK_SC',sans-serif] text-[#333]">
    <StatusBar />
    <TitleBar />
    <RiskBanner />
    <QuotePanel />
    <PeriodTabs />
    <ChartToolbar />
    <main className="grid grid-cols-[797fr_397fr] gap-[22px] pl-3 pr-8">
      <ChartColumn />
      <ChipColumn />
    </main>
    <MovesRow />
    <BottomBar />
  </div>
);

export default App;
